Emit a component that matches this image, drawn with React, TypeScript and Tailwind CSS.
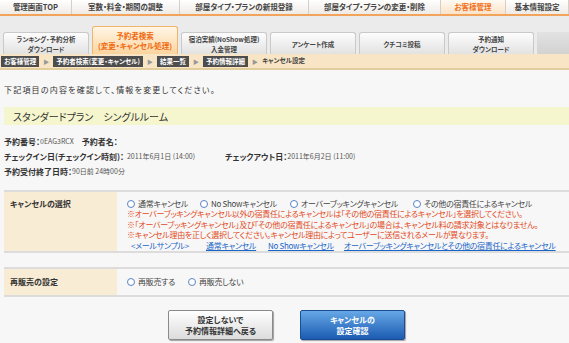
import React from "react";

const navItems = [
  { label: "管理画面TOP", w: "w-[72px]", active: false },
  { label: "室数・料金・期間の調整", w: "w-[108px]", active: false },
  { label: "部屋タイプ・プランの新規登録", w: "w-[129px]", active: false },
  { label: "部屋タイプ・プランの変更・削除", w: "w-[132px]", active: false },
  { label: "お客様管理", w: "w-[65px]", active: true },
  { label: "基本情報設定", w: "flex-1", active: false },
];

const tabs = [
  { l1: "ランキング・予約分析", l2: "ダウンロード", active: false },
  { l1: "予約者検索", l2: "(変更・キャンセル処理)", active: true },
  { l1: "宿泊実績(NoShow処理)", l2: "入金管理", active: false },
  { l1: "アンケート作成", l2: "", active: false },
  { l1: "クチコミ投稿", l2: "", active: false },
  { l1: "予約通知", l2: "ダウンロード", active: false },
];

const crumbs = ["お客様管理", "予約者検索(変更・キャンセル)", "結果一覧", "予約情報詳細"];

function Radio() {
  return <span className="inline-block w-[8px] h-[8px] rounded-full border border-[#5b84c4] bg-white mr-[3px] shrink-0" />;
}

function Arrow() {
  return <span className="text-[6px] text-[#999] mx-[4px]">▶</span>;
}

export default function App() {
  return (
    <div className="w-[569px] h-[343px] overflow-hidden bg-[#f7f7f7] text-[#333] font-['Noto_Sans_CJK_JP',sans-serif] [font-feature-settings:'palt']">
      {/* Global nav */}
      <div className="flex h-[16px] border-b-2 border-[#f2a35c] bg-gradient-to-b from-white to-[#efebe6]">
        {navItems.map((n, i) => (
          <div
            key={i}
            className={`${n.w} flex items-center justify-center text-[7.5px] font-bold border-r border-[#d6cfc8] ${
              n.active ? "text-[#f07020] bg-gradient-to-b from-[#fffaf3] to-[#fbe3c8]" : "text-[#444]"
            }`}
          >
            {n.label}
          </div>
        ))}
      </div>

      {/* Sub tabs */}
      <div className="flex items-end h-[38px] bg-[#ebebeb] pl-[3px] gap-[3px]">
        {tabs.map((t, i) => (
          <div
            key={i}
            className={`w-[86px] flex flex-col items-center justify-center rounded-t-[3px] border border-b-0 font-bold leading-[10px] ${
              t.active
                ? "h-[28px] border-[#f2b46a] bg-gradient-to-b from-[#fff6e6] to-[#fbd49e] text-[#f06a10] text-[7.5px]"
                : "h-[22px] border-[#c9c9c9] bg-gradient-to-b from-[#fdfdfd] to-[#e2e2e2] text-[#444] text-[6.5px]"
            }`}
          >
            <span>{t.l1}</span>
            {t.l2 && <span>{t.l2}</span>}
          </div>
        ))}
        <div className="flex-1 h-[22px] bg-gradient-to-b from-[#e2e2e2] to-[#d2d2d2]" />
      </div>

      {/* Breadcrumb */}
      <div className="flex items-center h-[16px] bg-[#f8e5c5] border-b-2 border-[#e3cd9c] pl-[1px] text-[6.5px]">
        {crumbs.map((c, i) => (
          <React.Fragment key={i}>
            <span className="bg-[#4d4d4d] text-white px-[3px] leading-[11px] font-bold">{c}</span>
            <Arrow />
          </React.Fragment>
        ))}
        <span className="text-[#444] font-bold">キャンセル設定</span>
      </div>

      {/* Content */}
      <div className="pl-[4px]">
        <p className="pt-[14px] text-[8px] leading-[12px] tracking-[1.2px]">
          下記項目の内容を確認して、情報を変更してください。
        </p>

        <div className="mt-[11px] h-[18px] bg-[#f6f6ce] flex items-center pl-[9px] text-[10px]">
          スタンダードプラン　シングルルーム
        </div>

        <div className="mt-[9px] text-[8px]">
          <div className="h-[15px] flex items-center">
            <b>予約番号：</b>
            <span className="text-[7px] text-[#555]">0EAG3RCX</span>
            <b className="ml-[8px]">予約者名：</b>
          </div>
          <div className="h-[15px] flex items-center">
            <b>チェックイン日(チェックイン時刻)：</b>
            <span className="text-[7px] text-[#555] ml-[3px]">2011年6月1日 (14:00)</span>
            <b className="ml-[30px]">チェックアウト日：</b>
            <span className="text-[7px] text-[#555]">2011年6月2日 (11:00)</span>
          </div>
          <div className="h-[15px] flex items-center">
            <b>予約受付終了日時：</b>
            <span className="text-[7px] text-[#555]">90日前 24時00分</span>
          </div>
        </div>

        {/* Cancel selection */}
        <div className="mt-[11px] flex border-y-2 border-[#dcdcdc]">
          <div className="w-[113px] shrink-0 bg-[#f9ecd5] pl-[6px] pt-[6px] text-[8px] leading-[11px] font-bold">
            キャンセルの選択
          </div>
          <div className="pl-[10px] pt-[6px] text-[8px] tracking-[-0.3px]">
            <div className="flex items-center h-[11px] text-[#444]">
              <label className="w-[73px] flex items-center"><Radio />通常キャンセル</label>
              <label className="w-[90px] flex items-center"><Radio />No&nbsp;Showキャンセル</label>
              <label className="w-[123px] flex items-center"><Radio />オーバーブッキングキャンセル</label>
              <label className="flex items-center"><Radio />その他の宿責任によるキャンセル</label>
            </div>
            <div className="text-[#e24a1c] leading-[10.5px] whitespace-nowrap">
              <p>※オーバーブッキングキャンセル以外の宿責任によるキャンセルは「その他の宿責任によるキャンセル」を選択してください。</p>
              <p>※「オーバーブッキングキャンセル」及び「その他の宿責任によるキャンセル」の場合は、キャンセル料の請求対象とはなりません。</p>
              <p>※キャンセル理由を正しく選択してください。キャンセル理由によってユーザーに送信されるメールが異なります。</p>
            </div>
            <div className="flex h-[10px] items-center pl-[4px] text-[#1a66c8] whitespace-nowrap">
              <span className="w-[75px]">&lt;メールサンプル&gt;</span>
              <a className="w-[62px] underline">通常キャンセル</a>
              <a className="w-[76px] underline">No&nbsp;Showキャンセル</a>
              <a className="underline">オーバーブッキングキャンセルとその他の宿責任によるキャンセル</a>
            </div>
          </div>
        </div>

        {/* Resale */}
        <div className="mt-[14px] flex h-[30px] border-y-2 border-[#dcdcdc]">
          <div className="w-[113px] shrink-0 bg-[#f9ecd5] pl-[6px] flex items-center text-[8px] font-bold">
            再販売の設定
          </div>
          <div className="pl-[10px] flex items-center text-[8px] text-[#444] tracking-[-0.3px]">
            <label className="w-[61px] flex items-center"><Radio />再販売する</label>
            <label className="flex items-center"><Radio />再販売しない</label>
          </div>
        </div>

        {/* Buttons */}
        <div className="mt-[13px] flex justify-center gap-[27px]">
          <button className="w-[105px] h-[30px] rounded-[2px] border border-[#8a8a8a] bg-gradient-to-b from-white to-[#dcdcdc] shadow-[1px_1px_1px_rgba(0,0,0,0.35)] text-[8px] font-bold leading-[11px] text-[#333]">
            設定しないで
            <br />
            予約情報詳細へ戻る
          </button>
          <button className="w-[105px] h-[30px] rounded-[2px] border border-[#1c4c94] bg-gradient-to-b from-[#66a8e6] to-[#1b5bb2] shadow-[1px_1px_1px_rgba(0,0,0,0.35)] text-[8px] font-bold leading-[11px] text-white">
            キャンセルの
            <br />
            設定確認
          </button>
        </div>
      </div>
    </div>
  );
}
